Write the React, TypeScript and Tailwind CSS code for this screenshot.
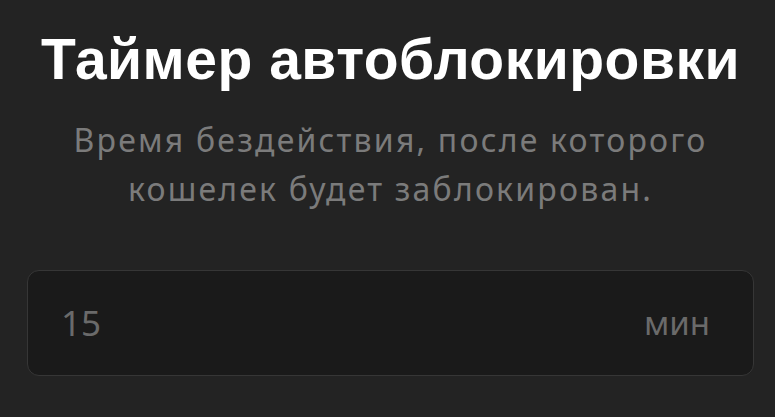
export default function App() {
  return (
    <div className="h-[417px] w-full overflow-hidden bg-[#232323] pl-[27px] pr-[21px] pt-[27px] font-['Liberation_Sans',sans-serif]">
      <h1 className="text-center text-[57px] font-bold leading-[64px] tracking-[0.5px] text-white">
        Таймер автоблокировки
      </h1>
      <p className="mx-auto mt-[24px] text-center font-['Noto_Sans',sans-serif] text-[32px] leading-[49px] tracking-[2.2px] text-[#7b7b7b]">
        Время бездействия, после которого
        <br />
        кошелек будет заблокирован.
      </p>
      {/* поле ввода таймера */}
      <div className="mt-[57px] flex h-[106px] items-center justify-between rounded-[12px] border border-[#363636] bg-[#1a1a1a] pl-[33px] pr-[43px] font-['Noto_Sans',sans-serif] text-[#6a6a6a]">
        <span className="text-[35px]">15</span>
        <span className="text-[33px]">мин</span>
      </div>
    </div>
  );
}
